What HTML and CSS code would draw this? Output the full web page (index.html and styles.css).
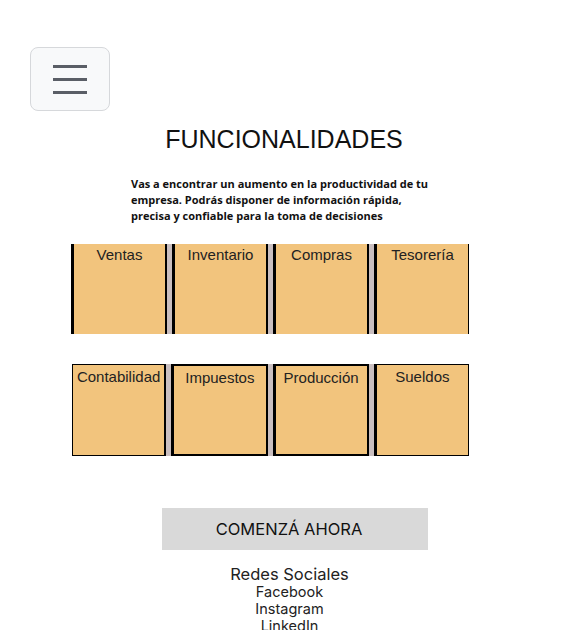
FILE: index.html
```html
<!DOCTYPE html>
<html lang="es">
<head>
<meta charset="utf-8">
<title>Funcionalidades</title>
<link rel="stylesheet" href="styles.css">
</head>
<body>
<header class="top">
  <button class="menu-btn" aria-label="Menú">
    <span class="bar"></span>
    <span class="bar"></span>
    <span class="bar"></span>
  </button>
</header>
<main>
  <h1 class="title">FUNCIONALIDADES</h1>
  <p class="intro">Vas a encontrar un aumento en la productividad de tu empresa. Podrás disponer de información rápida, precisa y confiable para la toma de decisiones</p>
  <div class="row row-1">
    <div class="tile">Ventas</div>
    <div class="tile">Inventario</div>
    <div class="tile">Compras</div>
    <div class="tile">Tesorería</div>
  </div>
  <div class="row row-2">
    <div class="tile">Contabilidad</div>
    <div class="tile">Impuestos</div>
    <div class="tile">Producción</div>
    <div class="tile">Sueldos</div>
  </div>
  <div class="cta-wrap">
    <a class="cta" href="#">COMENZÁ AHORA</a>
  </div>
  <footer class="social">
    <div class="social-title">Redes Sociales</div>
    <a href="#">Facebook</a>
    <a href="#">Instagram</a>
    <a href="#">LinkedIn</a>
  </footer>
</main>
</body>
</html>
```
FILE: styles.css
```css
html, body {
  margin: 0;
  padding: 0;
  background: #fff;
}
body {
  width: 561px;
  height: 630px;
  overflow: hidden;
  font-family: "Liberation Sans", Arial, sans-serif;
}
.top {
  padding: 47px 0 0 30px;
}
.menu-btn {
  width: 80px;
  height: 64px;
  box-sizing: border-box;
  background: #f8f9fa;
  border: 1px solid #d6d8db;
  border-radius: 8px;
  display: flex;
  flex-direction: column;
  align-items: center;
  justify-content: center;
  gap: 10px;
  padding: 0;
}
.menu-btn .bar {
  display: block;
  width: 34px;
  height: 3px;
  background: #5a5e66;
}
.title {
  margin: 12px 0 0 0;
  padding-left: 7px;
  text-align: center;
  font-family: "Liberation Sans", Arial, sans-serif;
  font-weight: normal;
  font-size: 25px;
  line-height: 32px;
  color: #111;
}
.intro {
  margin: 21px 0 0 131px;
  width: 305px;
  font-family: "Open Sans", "Noto Sans", sans-serif;
  font-weight: 700;
  font-size: 11px;
  line-height: 16px;
  color: #111;
}
.row {
  display: flex;
  gap: 5px;
  width: 398px;
  background: #c9bebf;
}
.row-1 {
  margin: 20px 0 0 71px;
}
.row-2 {
  margin: 30px 0 0 72px;
  width: 397px;
}
.tile {
  flex: 1;
  box-sizing: border-box;
  background: #f2c47d;
  color: #222;
  font-family: "Liberation Sans", Arial, sans-serif;
  font-size: 15px;
  text-align: center;
  padding-top: 2px;
}
.row-1 .tile {
  height: 90px;
  border-left: 3px solid #000;
  border-right: 2px solid #000;
}
.row-1 .tile:last-child {
  border-right-width: 1px;
}
.row-2 .tile {
  height: 92px;
  border: 2px solid #000;
  border-left-width: 3px;
  padding-top: 3px;
}
.row-2 .tile:first-child {
  border-width: 1px 2px 1px 1px;
}
.row-2 .tile:last-child {
  border-width: 1px 1px 1px 3px;
}
.cta-wrap {
  margin: 52px 0 0 162px;
}
.cta {
  display: flex;
  align-items: center;
  justify-content: center;
  box-sizing: border-box;
  width: 266px;
  height: 42px;
  padding-right: 12px;
  background: #d9d9d9;
  color: #111;
  font-family: Inter, "Noto Sans", sans-serif;
  font-size: 16.5px;
  text-decoration: none;
}
.social {
  margin-top: 15px;
  padding-left: 18px;
  display: flex;
  flex-direction: column;
  align-items: center;
  font-family: Inter, "Noto Sans", sans-serif;
  color: #222;
}
.social-title {
  font-size: 16.5px;
  line-height: 18px;
}
.social a {
  color: #222;
  text-decoration: none;
  font-size: 14.5px;
  line-height: 17px;
}
```
